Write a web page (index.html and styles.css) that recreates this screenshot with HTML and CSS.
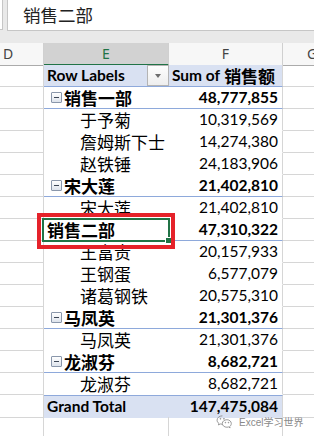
FILE: index.html
```html
<!DOCTYPE html>
<html lang="zh">

<head>
  <meta charset="UTF-8">
  <meta name="viewport" content="width=device-width, initial-scale=1.0">
  <title>销售二部</title>
  <link rel="stylesheet" href="styles.css">
</head>

<body>
  <header class="formula">
    <div class="namebox"></div>
    <div class="fx-input">销售二部</div>
  </header>

  <div class="row cols">
    <div class="hd hd-d">D</div>
    <div class="hd sel">E</div>
    <div class="hd">F</div>
    <div class="hd hd-g">G</div>
  </div>

  <main class="sheet">
    <div class="row head">
      <div class="c d"></div>
      <div class="c e">Row Labels<span class="filter"></span></div>
      <div class="c f">Sum of <span class="zh">销售额</span></div>
      <div class="c g"></div>
    </div>

    <div class="row group">
      <div class="c d"></div>
      <div class="c e"><span class="toggle"></span>销售一部</div>
      <div class="c f num">48,777,855</div>
      <div class="c g"></div>
    </div>
    <div class="row child">
      <div class="c d"></div>
      <div class="c e">于予菊</div>
      <div class="c f num">10,319,569</div>
      <div class="c g"></div>
    </div>
    <div class="row child">
      <div class="c d"></div>
      <div class="c e">詹姆斯下士</div>
      <div class="c f num">14,274,380</div>
      <div class="c g"></div>
    </div>
    <div class="row child">
      <div class="c d"></div>
      <div class="c e">赵铁锤</div>
      <div class="c f num">24,183,906</div>
      <div class="c g"></div>
    </div>

    <div class="row group">
      <div class="c d"></div>
      <div class="c e"><span class="toggle"></span>宋大莲</div>
      <div class="c f num">21,402,810</div>
      <div class="c g"></div>
    </div>
    <div class="row child">
      <div class="c d"></div>
      <div class="c e">宋大莲</div>
      <div class="c f num">21,402,810</div>
      <div class="c g"></div>
    </div>

    <div class="row group active">
      <div class="c d"></div>
      <div class="c e">销售二部
        <span class="select"></span>
        <span class="mark"></span>
      </div>
      <div class="c f num">47,310,322</div>
      <div class="c g"></div>
    </div>
    <div class="row child">
      <div class="c d"></div>
      <div class="c e">王富贵</div>
      <div class="c f num">20,157,933</div>
      <div class="c g"></div>
    </div>
    <div class="row child">
      <div class="c d"></div>
      <div class="c e">王钢蛋</div>
      <div class="c f num">6,577,079</div>
      <div class="c g"></div>
    </div>
    <div class="row child">
      <div class="c d"></div>
      <div class="c e">诸葛钢铁</div>
      <div class="c f num">20,575,310</div>
      <div class="c g"></div>
    </div>

    <div class="row group">
      <div class="c d"></div>
      <div class="c e"><span class="toggle"></span>马凤英</div>
      <div class="c f num">21,301,376</div>
      <div class="c g"></div>
    </div>
    <div class="row child">
      <div class="c d"></div>
      <div class="c e">马凤英</div>
      <div class="c f num">21,301,376</div>
      <div class="c g"></div>
    </div>

    <div class="row group">
      <div class="c d"></div>
      <div class="c e"><span class="toggle"></span>龙淑芬</div>
      <div class="c f num">8,682,721</div>
      <div class="c g"></div>
    </div>
    <div class="row child">
      <div class="c d"></div>
      <div class="c e">龙淑芬</div>
      <div class="c f num">8,682,721</div>
      <div class="c g"></div>
    </div>

    <div class="row total">
      <div class="c d"></div>
      <div class="c e">Grand Total</div>
      <div class="c f num">147,475,084</div>
      <div class="c g"></div>
    </div>

    <div class="row empty">
      <div class="c d"></div>
      <div class="c e"></div>
      <div class="c f"></div>
      <div class="c g"></div>
    </div>
  </main>

  <div class="watermark">
    <svg viewBox="0 0 24 20" fill="none" stroke="currentColor" stroke-width="1.2" stroke-linejoin="round">
      <path d="M9 2C4.6 2 1.5 4.8 1.5 8.1c0 1.9 1 3.5 2.6 4.6l-.7 2.2 2.6-1.4c1 .3 1.9.4 3 .4" />
      <path d="M15.5 7.5c-3.8 0-6.6 2.4-6.6 5.3s2.8 5.3 6.6 5.3c.8 0 1.6-.1 2.3-.4l2.1 1.2-.6-1.8c1.4-1 2.3-2.5 2.3-4.3 0-2.9-2.8-5.3-6.1-5.3z" />
      <circle cx="6.3" cy="6.2" r=".6" fill="currentColor" />
      <circle cx="11.2" cy="6.2" r=".6" fill="currentColor" />
      <circle cx="13.3" cy="11.6" r=".5" fill="currentColor" />
      <circle cx="17.6" cy="11.6" r=".5" fill="currentColor" />
    </svg>
    <span>Excel学习世界</span>
  </div>
</body>

</html>
```

FILE: styles.css
```css
body {
  margin: 0;
  inline-size: 314px;
  block-size: 436px;
  overflow: hidden;
  position: relative;
  background: #fff;
  font-family: Lato, "Noto Sans CJK SC", sans-serif;
  font-size: 15.5px;
  color: #000;
}

.zh {
  font-family: "Noto Sans CJK SC", sans-serif;
  font-size: 17px;
}

/* formula bar */
.formula {
  display: flex;
  gap: 4px;
  block-size: 43px;
  background: #e9e9e9;
}

.namebox {
  inline-size: 3px;
  block-size: 30px;
  box-sizing: border-box;
  background: #fff;
  border-right: 1px solid #c6c6c6;
  border-bottom: 1px solid #c6c6c6;
}

.fx-input {
  flex: 1;
  block-size: 31px;
  box-sizing: border-box;
  padding-inline-start: 15px;
  background: #fff;
  border-left: 1px solid #c6c6c6;
  border-bottom: 1px solid #c6c6c6;
  font-family: "Noto Sans CJK SC", sans-serif;
  font-size: 17.5px;
  line-height: 30px;
  color: #222;
}

/* sheet rows */
.row {
  display: grid;
  grid-template-columns: 44px 125px 114px 1fr;
  block-size: 22px;
}

.cols .hd {
  box-sizing: border-box;
  background: #f7f7f7;
  border-right: 1px solid #d0d0d0;
  border-bottom: 1px solid #ababab;
  font-family: "Noto Sans", sans-serif;
  font-size: 14px;
  line-height: 21px;
  text-align: center;
  color: #444;
}

.cols .hd-d {
  text-align: start;
  padding-inline-start: 3px;
}

.cols .hd-g {
  text-align: start;
  padding-inline-start: 24px;
  border-right: 0;
}

.cols .sel {
  background: #d2d2d2;
  color: #217346;
  border-bottom: 2px solid #217346;
}

.c {
  box-sizing: border-box;
  display: flex;
  align-items: center;
  white-space: nowrap;
  line-height: 21px;
  border-bottom: 1px solid transparent;
}

.d {
  border-right: 1px solid #d6d6d6;
  border-bottom-color: #d6d6d6;
}

.g {
  border-bottom-color: #d6d6d6;
}

.f {
  border-right: 1px solid #d6d6d6;
  padding-inline: 3px 4px;
}

.num {
  justify-content: flex-end;
}

.e {
  padding-inline-start: 3px;
}

.group .e,
.child .e {
  font-family: "Noto Sans CJK SC", sans-serif;
  font-size: 17px;
}

.head .e,
.head .f,
.total .e,
.total .f {
  background: #d9e1f2;
  font-weight: 700;
}

.head .e,
.head .f {
  border-bottom-color: #8ea9db;
}

.head .e {
  justify-content: space-between;
}

.head .f {
  gap: 4px;
}

.total .e,
.total .f {
  border-top: 1px solid #8ea9db;
}

.group .e,
.group .f {
  font-weight: 700;
  border-bottom-color: #8ea9db;
}

.group .e {
  padding-inline-start: 7px;
  gap: 2px;
}

.group.active .e {
  padding-inline-start: 3px;
  position: relative;
}

.child .e {
  padding-inline-start: 36px;
}

.empty .e {
  border-right: 1px solid #d6d6d6;
}

/* pivot controls */
.filter {
  position: relative;
  inline-size: 22px;
  block-size: 21px;
  box-sizing: border-box;
  background: linear-gradient(#fdfdfd, #eeeeee);
  border: 1px solid #b4b4b4;
}

.filter::after {
  content: "";
  position: absolute;
  left: 7px;
  top: 8px;
  border-inline: 3.5px solid transparent;
  border-top: 4px solid #6d6d6d;
}

.toggle {
  position: relative;
  inline-size: 11px;
  block-size: 11px;
  box-sizing: border-box;
  background: linear-gradient(#ffffff, #dde3ec);
  border: 1px solid #8a97ab;
  border-radius: 1px;
}

.toggle::after {
  content: "";
  position: absolute;
  left: 2px;
  top: 4px;
  inline-size: 5px;
  block-size: 1px;
  background: #3c4656;
}

/* selection and red annotation */
.select {
  position: absolute;
  left: -2px;
  top: -1px;
  right: -1px;
  bottom: -2px;
  border: 2px solid #217346;
}

.select::after {
  content: "";
  position: absolute;
  right: -4px;
  bottom: -4px;
  inline-size: 5px;
  block-size: 5px;
  background: #217346;
  border: 1px solid #fff;
}

.mark {
  position: absolute;
  left: -7px;
  top: -6px;
  inline-size: 138px;
  block-size: 36px;
  box-sizing: border-box;
  border: 4px solid #e5222a;
}

/* watermark */
.watermark {
  position: absolute;
  left: 216px;
  top: 414px;
  display: flex;
  align-items: center;
  gap: 6px;
  white-space: nowrap;
  color: #8a8a8a;
  font-family: "Liberation Sans", "Noto Sans CJK SC", sans-serif;
  font-size: 10px;
  text-shadow: 0 0 2px #fff;
}

.watermark svg {
  inline-size: 17px;
  block-size: 15px;
}
```
